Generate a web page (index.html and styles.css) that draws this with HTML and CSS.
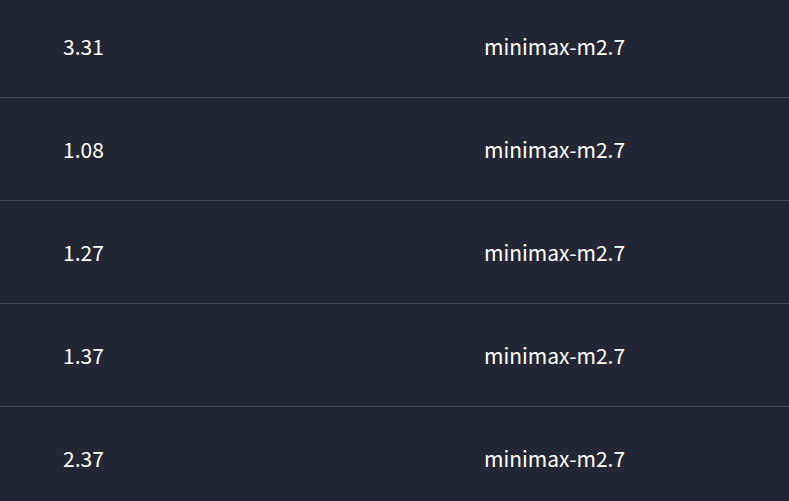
FILE: index.html
```html
<!DOCTYPE html>
<html lang="en">
<head>
  <meta charset="UTF-8">
  <meta name="viewport" content="width=device-width, initial-scale=1.0">
  <title>Runs</title>
  <link rel="stylesheet" href="styles.css">
</head>
<body>
  <div class="runs">
    <div class="row"><span class="score">3.31</span><span class="model">minimax-m2.7</span></div>
    <div class="row"><span class="score">1.08</span><span class="model">minimax-m2.7</span></div>
    <div class="row"><span class="score">1.27</span><span class="model">minimax-m2.7</span></div>
    <div class="row"><span class="score">1.37</span><span class="model">minimax-m2.7</span></div>
    <div class="row"><span class="score">2.37</span><span class="model">minimax-m2.7</span></div>
  </div>
</body>
</html>
```

FILE: styles.css
```css
body {
  margin: 0;
  background: #242733;
  color: #ffffff;
  font-family: 'Noto Sans CJK SC', 'Noto Sans', sans-serif;
  font-size: 21px;
  overflow: hidden;
}

.runs {
  margin-top: -5px;
}

.row {
  display: grid;
  grid-template-columns: 421px 1fr;
  align-items: center;
  height: 102px;
  padding-left: 63px;
  border-bottom: 1px solid #464a52;
}
```
